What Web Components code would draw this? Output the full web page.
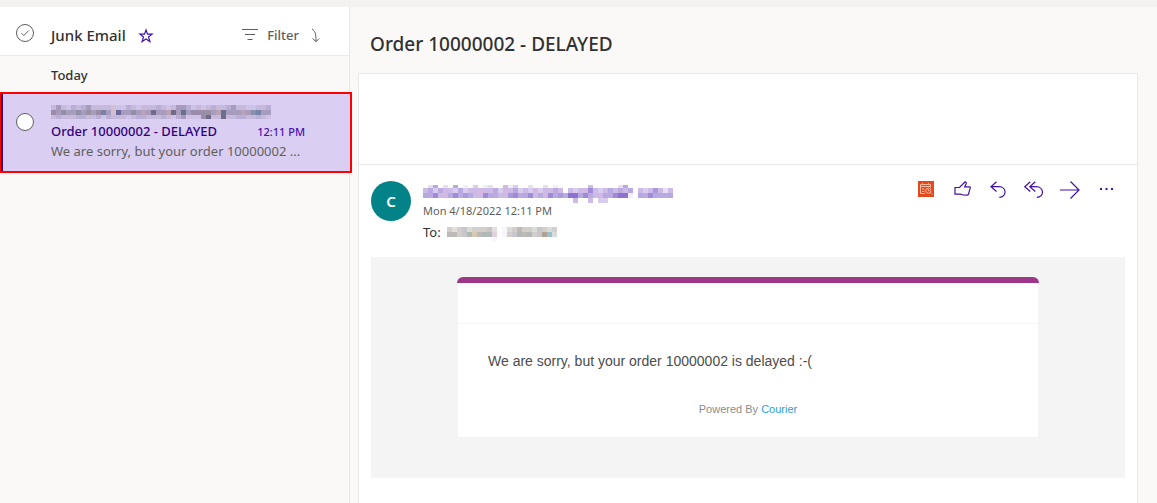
<!DOCTYPE html>
<html lang="en">
<head>
<meta charset="utf-8">
<title>Junk Email</title>
<style>
  html, body { margin: 0; height: 100%; }
  body {
    overflow: hidden;
    background: #faf9f8;
    color: #323130;
    font: 400 13px/20px "Noto Sans", "Open Sans", sans-serif;
  }
</style>
</head>
<body>
<mail-app></mail-app>

<script>
const define = (name, html, setup) => {
  const template = document.createElement('template');
  template.innerHTML = html;
  customElements.define(name, class extends HTMLElement {
    constructor() {
      super();
      this.attachShadow({ mode: 'open' }).append(template.content.cloneNode(true));
    }
    connectedCallback() {
      if (setup) setup(this, this.shadowRoot);
    }
  });
};

/* Mosaics that hide personal names and addresses. */
const MOSAICS = {
  sender: {
    cell: 5, heights: [5, 5, 4],
    palette: { a: '#c7b9dc', b: '#a99abb', c: '#b9afd6', d: '#c9c4e8', e: '#9a8ba9', f: '#8f91a9', g: '#9a8fa5', h: '#7584a9', i: '#d3bfd0', j: '#6b699b', k: '#706b88', l: '#a89cbe', m: '#b9a2b5', n: '#68718c', o: '#cfc2e6', p: '#8890ad' },
    rows: [
      'abadcaclaaaaidocadaaacaoabbcdaoacaaclaaodaac',
      'ebfllflglehlijllflmlkllmklnleegglmnlllmlphll',
      'acaaaccaacocaaaoaccaaacaocboooekaakaaccaacao'
    ]
  },
  from: {
    cell: 5, heights: [3, 5, 5, 5],
    palette: { a: '#cbbbe6', b: '#b6a8e0', c: '#9f8bd8', d: '#8d72d0', e: '#d8cdef', f: '#f1eefb', g: '#bca9df', h: '#d3b9e2', i: '#e6dff4', j: '#a99add' },
    rows: [
      ' ib i b f e fi  hfe  i  i f      a     ib     ',
      'abegaaebeaahaagehabeaeheaaga aeahcaeabagab aeajaia',
      'bgcahbcgjbahcbgahjcgbcaghcbjgddbcgahbgcddf bgcbbgb',
      '                              a  a ee            '
    ]
  },
  to: {
    cell: 5, heights: [5, 5, 4],
    palette: { a: '#d2cecb', b: '#bcb9b6', c: '#e5dedf', d: '#b1b8b8', e: '#d8cab0', f: '#c7c6ca', g: '#d9ddd9', h: '#b0a38f', i: '#9cbfd0', j: '#e0cfe0', k: '#faf5fb' },
    rows: [
      'acafgaaafc kgabaagfaga',
      'bbafdebddj kafdbdafhig',
      '         k            '
    ]
  }
};

define('pixel-mask', `
  <style>
    :host { display: block; }
    svg { display: block; }
  </style>
  <svg aria-hidden="true" shape-rendering="crispEdges"></svg>
`, (host, root) => {
  const { cell, heights, palette, rows } = MOSAICS[host.getAttribute('kind')];
  const svg = root.querySelector('svg');
  const columns = Number(host.getAttribute('columns'));
  let y = 0, rects = '';
  rows.forEach((row, r) => {
    [...row].slice(0, columns).forEach((key, c) => {
      if (palette[key]) rects += `<rect x="${c * cell}" y="${y}" width="${cell}" height="${heights[r]}" fill="${palette[key]}"/>`;
    });
    y += heights[r];
  });
  svg.setAttribute('width', columns * cell);
  svg.setAttribute('height', y);
  svg.innerHTML = rects;
});

define('mail-app', `
  <style>
    :host {
      display: grid;
      grid-template: 7px 1fr / 350px minmax(0, 1fr);
      height: 100%;
    }
    .strip { grid-column: 1 / -1; background: #f3f2f1; }
  </style>
  <div class="strip"></div>
  <message-list></message-list>
  <reading-pane></reading-pane>
`);

define('message-list', `
  <style>
    :host { display: block; border-right: 1px solid #e9e8e7; }
    header {
      display: flex; align-items: center;
      height: 48px; padding: 0 28px 0 16px;
      background: #fff; border-bottom: 1px solid #e9e8e7;
    }
    button {
      display: flex; align-items: center; padding: 0; border: 0;
      background: none; color: #605e5c; font: inherit; cursor: pointer;
    }
    svg { display: block; fill: none; stroke: currentColor; }
    .all { margin-top: 4px; }
    h1 { margin: 8px 12px 0 17px; font-size: 15px; line-height: 20px; font-weight: 500; }
    .star { color: #4211a8; margin-top: 9px; }
    .tools { display: flex; gap: 12px; margin: 8px 0 0 auto; }
    .filter { gap: 9px; font-weight: 500; }
    h2 { margin: 0; padding: 9px 0 7px 51px; font-size: 13px; line-height: 20px; font-weight: 500; }
  </style>
  <header>
    <button class="all" aria-label="Select all messages">
      <svg width="18" height="18" viewBox="0 0 18 18"><circle cx="9" cy="9" r="8.5"/><path d="M5.500 9.200l2.300 2.300 4.800-4.800"/></svg>
    </button>
    <h1>Junk Email</h1>
    <button class="star" aria-label="Add to favorites">
      <svg width="16" height="16" viewBox="0 0 16 16"><path stroke-width="1.2" d="M8 2l1.500 4.200h4.500L10.500 9l1.400 4.600L8 10.900l-3.900 2.700L5.500 9 2 6.200h4.500z"/></svg>
    </button>
    <div class="tools">
      <button class="filter">
        <svg width="16" height="14" viewBox="0 0 16 14"><path stroke-width="1.2" d="M0 1.500h16M3 6.500h10M5.500 11.500h5"/></svg>
        <span>Filter</span>
      </button>
      <button aria-label="Sort order">
        <svg width="10" height="15" viewBox="0 0 10 15"><path d="M1 1c3 2 4 4 4 12.500M1.500 10.500L5 13.700l3.200-3.200"/></svg>
      </button>
    </div>
  </header>
  <h2>Today</h2>
  <message-row>
    <pixel-mask slot="from" kind="sender" columns="44"></pixel-mask>
    <span slot="subject">Order 10000002 - DELAYED</span>
    <span slot="time">12:11 PM</span>
    <span slot="preview">We are sorry, but your order 10000002 ...</span>
  </message-row>
`);

define('message-row', `
  <style>
    :host {
      display: flex; box-sizing: border-box; position: relative; z-index: 1;
      margin: 0 -3px 0 -1px; height: 81px; padding: 11px 45px 0 13px;
      border: 2px solid #f00; background: #dacff2;
      box-shadow: inset 2px 0 #32007f;
    }
    input {
      appearance: none; flex: none; box-sizing: border-box;
      width: 18px; height: 18px; margin: 8px 17px 0 2px;
      border: 1px solid #605e5c; border-radius: 50%; background: #fff;
    }
    .body { flex: 1; min-width: 0; }
    .line { display: flex; justify-content: space-between; height: 20px; margin-top: 2px; color: #32007f; font-weight: 500; white-space: nowrap; }
    .time { font-size: 11px; line-height: 21px; color: #4b0fb0; }
    .preview { color: #605e5c; white-space: nowrap; }
  </style>
  <input type="checkbox" aria-label="Select message">
  <div class="body">
    <slot name="from"></slot>
    <div class="line"><slot name="subject"></slot><span class="time"><slot name="time"></slot></span></div>
    <div class="preview"><slot name="preview"></slot></div>
  </div>
`);

define('reading-pane', `
  <style>
    :host { display: flex; flex-direction: column; min-width: 0; padding: 0 19px 0 8px; }
    h1 { margin: 0; padding: 24px 12px 16px; font-size: 19px; line-height: 26px; font-weight: 500; }
    article { flex: 1; background: #fff; border: 1px solid #eae9e9; border-bottom: 0; }
    .banner { height: 90px; border-bottom: 1px solid #eae9e9; }
    .message { padding: 16px 12px; }
  </style>
  <h1>Order 10000002 - DELAYED</h1>
  <article>
    <div class="banner"></div>
    <div class="message">
      <message-header></message-header>
      <courier-email>We are sorry, but your order 10000002 is delayed :-(</courier-email>
    </div>
  </article>
`);

define('message-header', `
  <style>
    :host { display: flex; height: 76px; gap: 12px; }
    .avatar {
      flex: none; width: 40px; height: 40px; border-radius: 50%;
      background: #038387; color: #fff;
      font-size: 15px; font-weight: 600; line-height: 40px; text-align: center;
    }
    .who { flex: 1; padding-top: 4px; }
    .date { font-size: 11px; line-height: 16px; color: #605e5c; }
    .to { display: flex; gap: 6px; margin-top: 2px; line-height: 22px; }
    .to pixel-mask { margin-top: 6px; }
  </style>
  <div class="avatar">C</div>
  <div class="who">
    <pixel-mask kind="from" columns="50"></pixel-mask>
    <div class="date">Mon 4/18/2022 12:11 PM</div>
    <div class="to"><span>To:</span><pixel-mask kind="to" columns="22"></pixel-mask></div>
  </div>
  <message-actions></message-actions>
`);

define('message-actions', `
  <style>
    :host { display: flex; height: 16px; margin-right: 9px; gap: 16px; }
    button { display: grid; place-items: center; width: 20px; height: 16px; padding: 0; border: 0; background: none; color: #4211a8; cursor: pointer; }
    svg { display: block; overflow: visible; fill: none; stroke: currentColor; stroke-width: 1.2; }
  </style>
  <button aria-label="Find time">
    <svg width="16" height="16" viewBox="0 0 16 16"><path stroke="none" fill="#e2491d" d="M0 0h16v16H0z"/><g stroke="#f8b9a2" stroke-width="1"><path d="M7 12.500H2.500v-9h10v3M2.500 5.500h10M4.500 2v2M10.500 2v2M4 8h2.500M4 10.500h2.500"/><circle cx="10.300" cy="9.700" r="2.600"/><path d="M10.300 8.300v1.500h1.200M12.300 11.500l2 2"/></g></svg>
  </button>
  <button aria-label="Like">
    <svg width="17" height="16" viewBox="0 0 17 16"><path d="M1 6.500h4.500L11.200.8c1.200.4 1.300 1.300.7 2.500L10.700 5.800h5.300c.4.500.4 1 .1 1.600l-1.700 6.100-1.400.6-4-.1-2.500-.8H1z"/></svg>
  </button>
  <button aria-label="Reply">
    <svg width="16" height="17" viewBox="0 0 16 17"><path d="M6.500.8L1 5.700l5.500 4.800M1 5.700h8c8 0 8 10.600.3 10.600"/></svg>
  </button>
  <button aria-label="Reply all">
    <svg width="20" height="17" viewBox="0 0 20 17"><path d="M6.300.8L.8 5.700l5.500 4.800M11.300.8L5.800 5.700l5.500 4.800M5.800 5.700H12c8.500 0 8.500 10.600.8 10.600"/></svg>
  </button>
  <button aria-label="Forward">
    <svg width="20" height="18" viewBox="0 0 20 18"><path d="M0 9h19M10.500.5L19 9l-8.500 8.500"/></svg>
  </button>
  <button aria-label="More actions">
    <svg width="13" height="2" viewBox="0 0 13 2"><path stroke="none" fill="currentColor" d="M0 0h2v2H0zM5.500 0h2v2h-2zM11 0h2v2h-2z"/></svg>
  </button>
`);

define('courier-email', `
  <style>
    :host {
      display: block; padding: 20px 24px 41px; background: #f4f4f4;
      font-family: "Liberation Sans", Arial, sans-serif;
    }
    .bar { box-sizing: border-box; max-width: 582px; height: 6px; margin: 0 auto; background: #9d3789; border-radius: 6px 6px 0 0; }
    .card { max-width: 580px; margin: 0 auto; background: #fff; }
    .logo { height: 40px; border-bottom: 1px solid #f4f4f4; }
    .content { padding: 26px 30px 19px; }
    p { margin: 0; font-size: 14px; line-height: 22px; color: #4c4c4c; }
    footer { margin-top: 28px; font-size: 11px; line-height: 18px; text-align: center; color: #8c8c8c; }
    a { color: #2a9edb; text-decoration: none; }
  </style>
  <div class="bar"></div>
  <div class="card">
    <div class="logo"></div>
    <div class="content">
      <p><slot></slot></p>
      <footer>Powered By <a href="#">Courier</a></footer>
    </div>
  </div>
`);
</script>
</body>
</html>
